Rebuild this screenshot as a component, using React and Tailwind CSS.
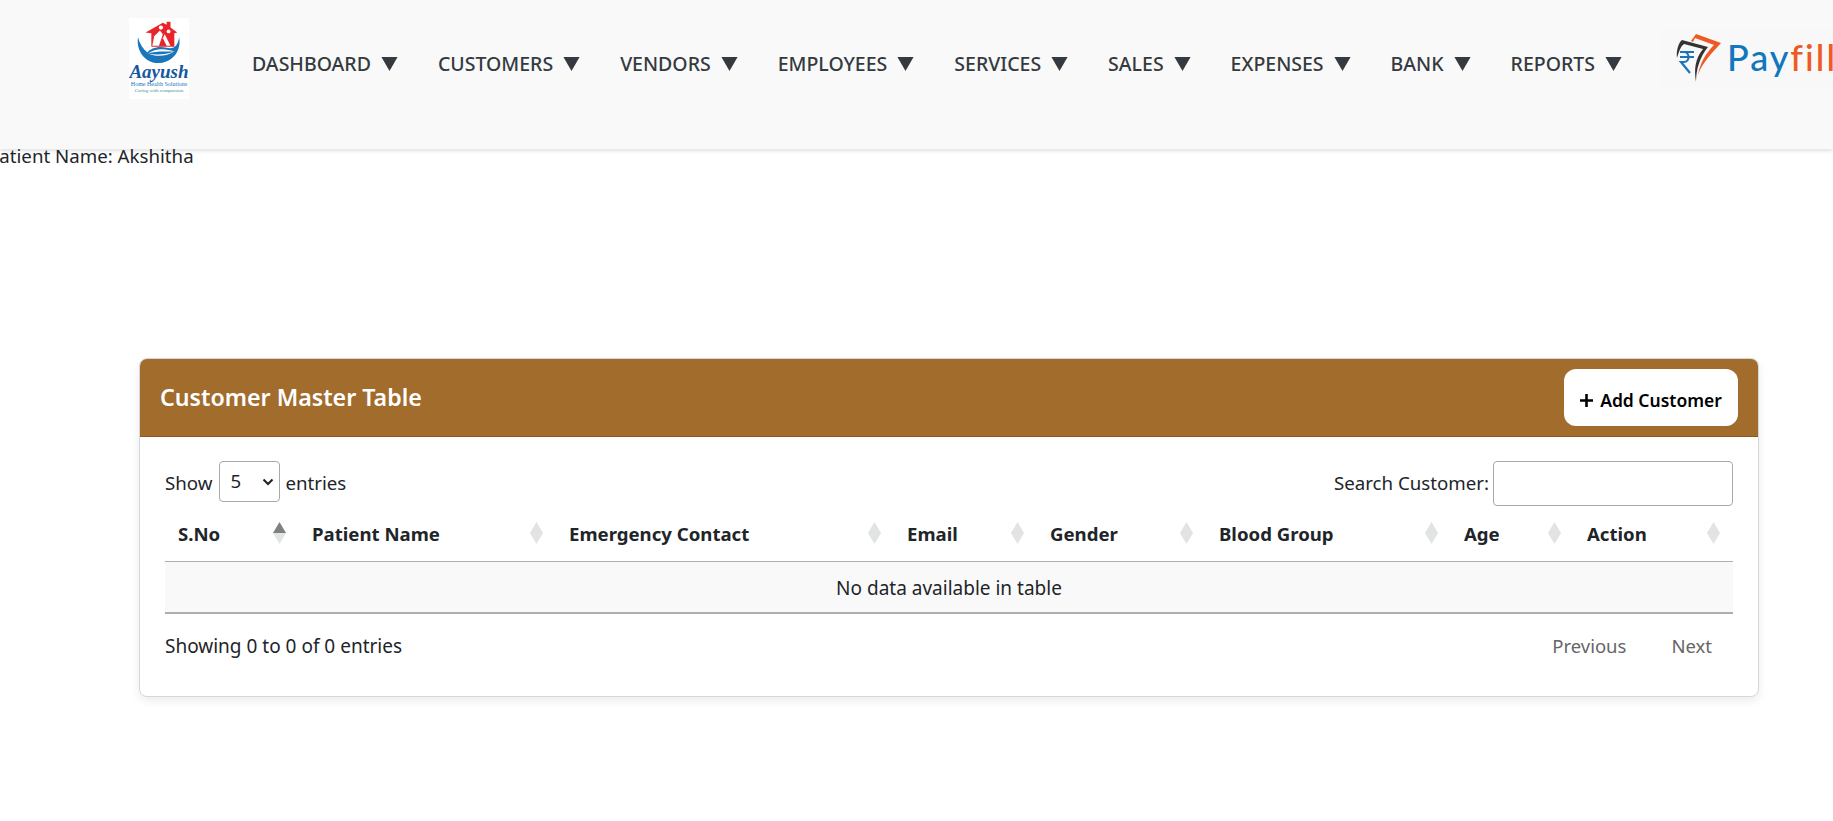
const FONT = "font-['Noto_Sans',sans-serif]";

const NAV_ITEMS = ['DASHBOARD', 'CUSTOMERS', 'VENDORS', 'EMPLOYEES', 'SERVICES', 'SALES', 'EXPENSES', 'BANK', 'REPORTS'];

const COLUMNS = [
  { label: 'S.No', width: 'w-[134px]', active: true },
  { label: 'Patient Name', width: 'w-[257px]' },
  { label: 'Emergency Contact', width: 'w-[338px]' },
  { label: 'Email', width: 'w-[143px]' },
  { label: 'Gender', width: 'w-[169px]' },
  { label: 'Blood Group', width: 'w-[245px]' },
  { label: 'Age', width: 'w-[123px]' },
  { label: 'Action', width: 'w-[159px]' },
];

const AayushLogo = () => (
  <div className="w-[60px] h-[81px] bg-white shrink-0 flex flex-col items-center overflow-hidden">
    <svg viewBox="0 0 60 48" className="w-[60px] h-[46px] shrink-0">
      <path d="M16 15 L34 5 L38 7 V4 H42 V10 L49 15 L46 16 V30 H22 V16 Z" fill="#e9252b" />
      <circle cx="32" cy="10" r="2.2" fill="#fff" />
      <circle cx="40" cy="14" r="2" fill="#fff" />
      <path d="M23 29 L25 19 L31 13 L34 17 L30 29 Z" fill="#fff" />
      <path d="M36 17 L42 29 L38 29 L34 21 Z" fill="#fff" />
      <path d="M8 20 C6 36 17 47 29 47 C42 47 54 36 51 20 C50 28 46 33 38 31 C28 29 21 32 18 36 C13 32 10 27 8 20 Z" fill="#1a75bb" />
      <path d="M19 37 C26 31 38 32 46 35 C38 40 27 41 19 37 Z" fill="#fff" />
      <path d="M19 37 C26 34 38 35 46 35 C38 38 27 39 19 37 Z" fill="#1a75bb" />
    </svg>
    <span className="font-['Liberation_Serif',serif] italic font-bold text-[19px] leading-[16px] text-[#15589f]">Aayush</span>
    <span className="font-['Liberation_Serif',serif] text-[6px] leading-[7px] text-[#1a75bb] mt-[1px] whitespace-nowrap">Home Health Solutions</span>
    <span className="font-['Liberation_Serif',serif] text-[5px] leading-[6px] text-[#3d8f9f] whitespace-nowrap">Caring with compassion</span>
  </div>
);

const PayfillLogo = () => (
  <div className="ml-[39px] w-[173px] h-[62px] shrink-0 bg-[#f8f8f8] flex items-center pl-[15px]">
    <svg viewBox="0 0 50 50" className="w-[50px] h-[50px] shrink-0">
      <path d="M15 8 L20 1 L45 10 C36 20 26 30 22 42 C24 30 30 20 38 12 L19 5 L17 9 Z" fill="#ee5a24" />
      <path d="M1 25 C0 17 3 9 6 7 L32 14 C24 24 20 36 20 49 C18 36 19 26 27 16 L8 11 C4 14 3 19 1 25 Z" fill="#333" />
      <path d="M4 19 H18 M4 24 H18 M8 19 C14 19 14 29 8 29 H5 L14 40" fill="none" stroke="#1a75bb" strokeWidth="2.2" />
    </svg>
    <span className="font-['Lato',sans-serif] font-medium text-[36px] leading-[1] tracking-[2px] ml-[1px] -mt-[3px] whitespace-nowrap">
      <span className="text-[#1277bd]">Pay</span>
      <span className="text-[#ee5a24]">fill</span>
    </span>
  </div>
);

const SortIcon = ({ active }) => (
  <svg viewBox="0 0 13 22" className="w-[13px] h-[22px] shrink-0">
    <path d="M6.5 0 L13 11 H0 Z" fill={active ? '#7f8083' : '#e2e3e3'} />
    <path d="M6.5 22 L13 11 H0 Z" fill="#e2e3e3" />
  </svg>
);

const Navbar = () => (
  <nav className="h-[149px] bg-[#f9f9f9] shadow-[0_2px_4px_rgba(0,0,0,0.12)] relative z-10 flex items-start pl-[129px] pt-[18px]">
    <AayushLogo />
    <ul className="ml-[63px] flex gap-[40px] mt-[32px]">
      {NAV_ITEMS.map((item) => (
        <li key={item} className="flex items-center gap-[10px] h-[28px] text-[19.5px] font-medium text-[#343a40] whitespace-nowrap">
          {item}
          <svg viewBox="0 0 15 13" className="w-[17px] h-[14px]">
            <path d="M0 0 H15 L7.5 13 Z" fill="#343a40" />
          </svg>
        </li>
      ))}
    </ul>
    <div className="mt-[9px]">
      <PayfillLogo />
    </div>
  </nav>
);

const CustomerTable = () => (
  <section className="ml-[139px] mt-[190px] w-[1620px] h-[339px] bg-white rounded-[8px] border border-[#d5d7da] shadow-[0_4px_10px_rgba(0,0,0,0.08)] overflow-hidden">
    <header className="h-[78px] bg-[#a16c2c] border-b border-[#8a5c24] flex items-center justify-between pl-[20px] pr-[20px]">
      <h2 className="text-[23.2px] font-semibold text-white">Customer Master Table</h2>
      <button className="w-[174px] h-[57px] bg-white rounded-[12px] text-[17.5px] font-semibold text-black flex items-center justify-center gap-[7px] pt-[6px]">
        <svg viewBox="0 0 12 12" className="w-[13px] h-[13px]">
          <path d="M6 0 V12 M0 6 H12" stroke="#000" strokeWidth="2.4" />
        </svg>
        Add Customer
      </button>
    </header>

    <div className="px-[25px]">
      <div className="flex justify-between items-start mt-[24px] h-[44px] text-[#212529] text-[18.7px]">
        <label className="flex items-center h-[41px]">
          <span className="pt-[3px] mr-[7px]">Show</span>
          <span className="w-[61px] h-[41px] border border-[#a9a9a9] rounded-[4px] flex items-center justify-between pl-[10px] pr-[5px]">
            5
            <svg viewBox="0 0 12 8" className="w-[12px] h-[8px]">
              <path d="M1.5 1.5 L6 6 L10.5 1.5" fill="none" stroke="#222" strokeWidth="2" />
            </svg>
          </span>
          <span className="pt-[3px] ml-[5px]">entries</span>
        </label>
        <label className="flex items-center gap-[4px] h-[44px]">
          <span className="pt-[1px]">Search Customer:</span>
          <span className="w-[240px] h-[45px] border border-[#a9a9a9] rounded-[4px] bg-white" />
        </label>
      </div>

      <table className="table-fixed w-[1568px] border-collapse text-[19px] text-[#212529]">
        <thead>
          <tr className="h-[56px] border-b border-[#aeaeae]">
            {COLUMNS.map((col) => (
              <th key={col.label} className={`${col.width} p-0 pl-[13px] pr-[13px] text-left text-[18.6px] font-bold`}>
                <div className="flex items-center justify-between">
                  <span className="pt-[3px]">{col.label}</span>
                  <SortIcon active={col.active} />
                </div>
              </th>
            ))}
          </tr>
        </thead>
        <tbody>
          <tr className="h-[52px] bg-[#f9f9f9] border-b-2 border-[#aeaeae]">
            <td colSpan={8} className="text-center pt-[2px]">No data available in table</td>
          </tr>
        </tbody>
      </table>

      <div className="flex justify-between items-center mt-[18px] text-[19px] text-[#212529]">
        <span>Showing 0 to 0 of 0 entries</span>
        <div className="flex gap-[45px] pr-[21px] text-[18.5px] text-[#666666]">
          <span>Previous</span>
          <span>Next</span>
        </div>
      </div>
    </div>
  </section>
);

export default function App() {
  return (
    <div className={`w-full h-[821px] overflow-hidden bg-white ${FONT}`}>
      <Navbar />
      <p className="text-[18.7px] leading-[24px] -ml-[12px] -mt-[5px] text-[#212529] relative z-20 whitespace-nowrap">Patient Name: Akshitha</p>
      <CustomerTable />
    </div>
  );
}
